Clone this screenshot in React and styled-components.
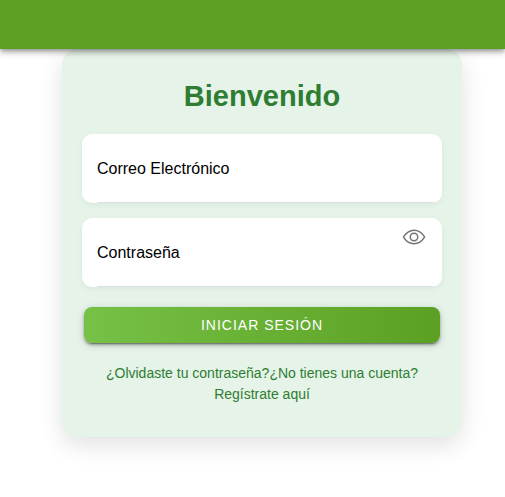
import React, { useState } from "react";
import styled, { createGlobalStyle } from "styled-components";
import { IoEyeOutline, IoEyeOffOutline } from "react-icons/io5";

const GlobalStyle = createGlobalStyle`
  * {
    box-sizing: border-box;
  }

  body {
    margin: 0;
    background: #fff;
    color: #000;
    font-family: "Liberation Sans", Arial, sans-serif;
    font-size: 16px;
  }
`;

const Header = styled.header`
  position: relative;
  z-index: 1;
  height: 49px;
  background: #5ba023;
  box-shadow:
    0 2px 4px -1px rgba(0, 0, 0, 0.25),
    0 4px 5px 0 rgba(0, 0, 0, 0.16),
    0 1px 10px 0 rgba(0, 0, 0, 0.16);
`;

const Main = styled.main`
  display: flex;
  justify-content: center;
  padding: 0 43px 61px 62px;
`;

const Card = styled.section`
  flex: 1;
  max-width: 400px;
  padding: 29px 20px 32px;
  border-radius: 16px;
  background: #e5f3e8;
  box-shadow: 0 8px 24px rgba(0, 0, 0, 0.12);
`;

const Title = styled.h1`
  margin: 0 0 20px;
  color: #2e7d32;
  font-size: 29px;
  line-height: 36px;
  text-align: center;
`;

const Form = styled.form`
  display: flex;
  flex-direction: column;
`;

const Field = styled.div`
  display: flex;
  height: 69px;
  margin-bottom: 15px;
  padding-left: 15px;
  overflow: hidden;
  border-radius: 10px;
  background: #fff;
  box-shadow: 0 2px 6px rgba(0, 0, 0, 0.05);
`;

const FieldInner = styled.div`
  display: flex;
  flex: 1;
  min-width: 0;
  align-items: center;
  padding: 1px 16px 0 0;
  border-bottom: 1px solid #dedede;
`;

const Label = styled.label`
  flex: none;
  margin-right: 16px;
  line-height: 20px;
`;

const Input = styled.input`
  flex: 1;
  min-width: 0;
  height: 44px;
  padding: 0;
  border: 0;
  outline: 0;
  background: transparent;
  font: inherit;
`;

const IconButton = styled.button`
  display: flex;
  align-self: flex-start;
  margin: 6px 0 0;
  padding: 0;
  border: 0;
  background: transparent;
  color: #737373;
  font-size: 24px;
  cursor: pointer;
`;

const SubmitButton = styled.button`
  height: 36px;
  margin: 5px 2px 20px;
  border: 0;
  border-radius: 8px;
  background: linear-gradient(90deg, #76c146, #5ba023);
  box-shadow:
    0 3px 1px -2px rgba(0, 0, 0, 0.25),
    0 2px 3px 0 rgba(0, 0, 0, 0.3),
    0 2px 8px 0 rgba(0, 0, 0, 0.15);
  color: #fff;
  font-family: inherit;
  font-size: 14px;
  letter-spacing: 1px;
  text-transform: uppercase;
  cursor: pointer;
`;

const Links = styled.nav`
  color: #2e7d32;
  font-size: 14px;
  line-height: 21px;
  text-align: center;
`;

const TextLink = styled.a`
  color: inherit;
  text-decoration: none;
`;

const LinkLine = styled.span`
  display: inline-block;
`;

function TextField({ id, label, type, autoComplete, children }) {
  return (
    <Field>
      <FieldInner>
        <Label htmlFor={id}>{label}</Label>
        <Input id={id} type={type} autoComplete={autoComplete} />
        {children}
      </FieldInner>
    </Field>
  );
}

export default function App() {
  const [visible, setVisible] = useState(false);

  return (
    <>
      <GlobalStyle />
      <Header />
      <Main>
        <Card>
          <Title>Bienvenido</Title>
          <Form onSubmit={(event) => event.preventDefault()}>
            <TextField
              id="email"
              label="Correo Electrónico"
              type="email"
              autoComplete="email"
            />
            <TextField
              id="password"
              label="Contraseña"
              type={visible ? "text" : "password"}
              autoComplete="current-password"
            >
              <IconButton
                type="button"
                aria-label="Mostrar contraseña"
                aria-pressed={visible}
                onClick={() => setVisible(!visible)}
              >
                {visible ? <IoEyeOffOutline /> : <IoEyeOutline />}
              </IconButton>
            </TextField>
            <SubmitButton type="submit">Iniciar sesión</SubmitButton>
          </Form>
          <Links>
            <TextLink href="#recuperar">¿Olvidaste tu contraseña?</TextLink>
            <TextLink href="#registro">
              <span>¿No tienes una cuenta?</span>{" "}
              <LinkLine>Regístrate aquí</LinkLine>
            </TextLink>
          </Links>
        </Card>
      </Main>
    </>
  );
}
